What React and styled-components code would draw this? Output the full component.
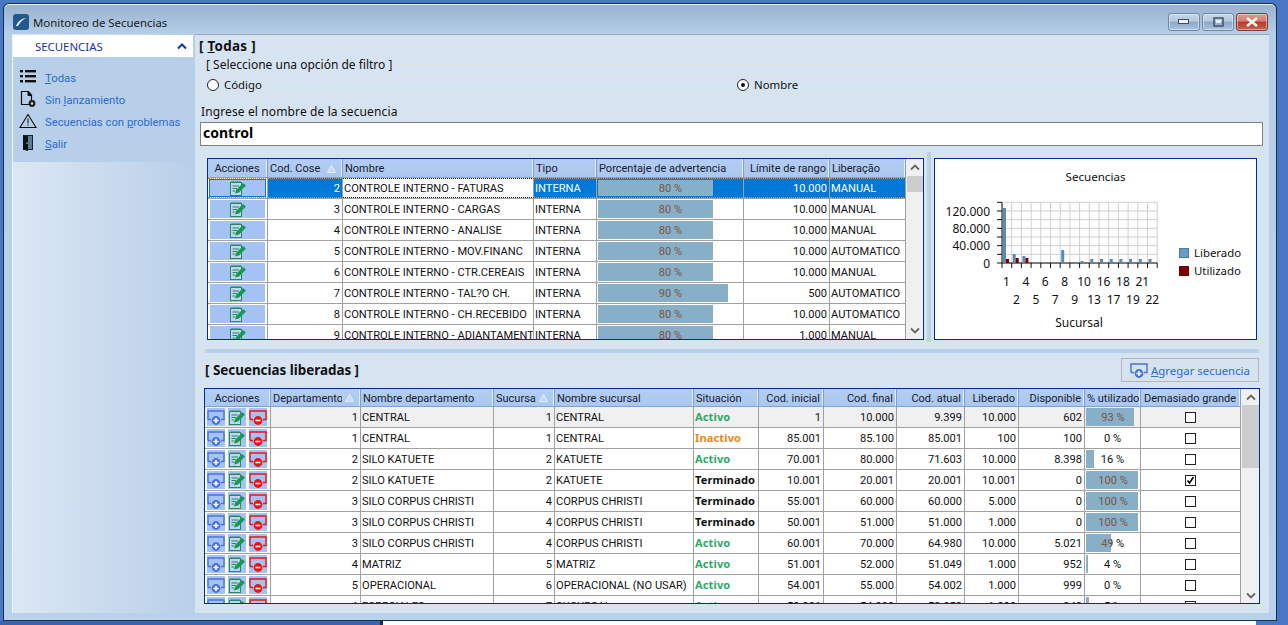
import React from "react";
import styled, { createGlobalStyle } from "styled-components";

const GlobalStyle = createGlobalStyle`
  html, body { margin: 0; padding: 0; background: #4a76c6; }
  body { font-family: "Noto Sans", "DejaVu Sans", sans-serif; font-size: 12px; color: #111; }
  * { box-sizing: border-box; }
`;

const Desktop = styled.div`
  width: 1288px;
  height: 625px;
  overflow: hidden;
  display: flex;
  flex-direction: column;
  background: #4a76c6;
`;

const Win = styled.div`
  width: 1274px;
  height: 618px;
  margin: 3px 0 0 3px;
  border: 1px solid #16324a;
  border-bottom-color: #0d3a4a;
  border-radius: 6px 6px 0 0;
  box-shadow: inset 0 1px 0 #e8f0f8;
  background: linear-gradient(#98b2cf 0, #b6cfe9 31px, #b9d2ec 100%);
  display: flex;
  flex-direction: column;
`;

const TitleBar = styled.div`
  height: 30px;
  flex: none;
  display: flex;
  align-items: center;
  padding: 5px 8px 0 9px;
`;

const TitleText = styled.span`
  margin-left: 4px;
  padding-top: 2px;
  font-size: 11.4px;
  color: #1a1a1a;
  flex: 1;
`;

const WinBtn = styled.div`
  width: 32px;
  height: 18px;
  margin-left: 2px;
  border: 1px solid ${(p) => (p.$close ? "#7a3b36" : "#6f86a3")};
  border-radius: 3px;
  box-shadow: inset 0 0 0 1px rgba(255, 255, 255, 0.45);
  background: ${(p) =>
    p.$close
      ? "linear-gradient(#dc9c8e 0, #cf7f70 45%, #b8392a 50%, #c9604e 100%)"
      : "linear-gradient(#c6d6e8 0, #b3c8de 45%, #8ba8c8 50%, #aac4de 100%)"};
  display: flex;
  align-items: center;
  justify-content: center;
`;

const WinBody = styled.div`
  flex: 1;
  min-height: 0;
  display: flex;
  gap: 2px;
  padding: 0 7px 7px 8px;
`;

const Sidebar = styled.aside`
  width: 181px;
  flex: none;
  border-left: 1px solid #eef4fa;
  padding-top: 1px;
  display: flex;
  flex-direction: column;
  background: linear-gradient(90deg, #dbe7f4, #b9cfe9);
`;

const SideHead = styled.div`
  height: 22px;
  flex: none;
  background: #fff;
  color: #1b2f9e;
  font-size: 11.4px;
  padding: 1px 6px 0 22px;
  display: flex;
  align-items: center;
  justify-content: space-between;
`;

const SideList = styled.nav`
  height: 105px;
  flex: none;
  background: #b8cfe9;
  padding: 9px 0 0 6px;
`;

const SideLink = styled.div`
  height: 22px;
  display: flex;
  align-items: center;
  gap: 8px;
  color: #2a6ccf;
  font-family: "Roboto", sans-serif;
  font-size: 11.3px;
  white-space: nowrap;
  svg { flex: none; }
  span { padding-top: 2px; }
`;

const Main = styled.main`
  flex: 1;
  min-width: 0;
  background: #d6e4f2;
  border-top: 1px solid #a3a8ad;
  padding-top: 3px;
  display: flex;
  flex-direction: column;
`;

const Heading = styled.div`
  font-weight: 700;
  font-size: 13.4px;
  line-height: 16px;
  color: #111;
  white-space: pre;
`;

const TopHeading = styled(Heading)`
  margin-left: 4px;
  height: 16px;
  letter-spacing: 0.3px;
`;

const FilterBox = styled.fieldset`
  margin: 3px 4px 0 3px;
  padding: 7px 8px 0;
  height: 39px;
  border: 1px solid #dfe3e6;
  min-width: 0;
`;

const FilterLegend = styled.legend`
  height: 14px;
  padding: 1px 0 0;
  margin-left: -1px;
  line-height: 14px;
  font-size: 12px;
`;

const RadioRow = styled.div`
  display: grid;
  grid-template-columns: 530px 1fr;
`;

const RadioItem = styled.label`
  display: flex;
  align-items: center;
  gap: 5px;
  line-height: 14px;
  font-size: 11.4px;
`;

const RadioDot = styled.span`
  width: 12px;
  height: 12px;
  border-radius: 50%;
  border: 1px solid #222;
  background: #fff;
  display: flex;
  align-items: center;
  justify-content: center;
  &::after {
    content: "";
    width: 4px;
    height: 4px;
    border-radius: 50%;
    background: ${(p) => (p.$on ? "#111" : "transparent")};
  }
`;

const FieldLabel = styled.div`
  margin: 8px 0 0 6px;
  padding-top: 1px;
  height: 14px;
  line-height: 14px;
  letter-spacing: 0.12px;
`;

const SearchBox = styled.input`
  display: block;
  width: 1063px;
  height: 24px;
  margin: 4px 0 0 5px;
  padding: 0 2px 3px;
  border: 1px solid #808080;
  background: #fff;
  font-family: inherit;
  font-size: 14px;
  font-weight: 700;
  color: #000;
  outline: none;
`;

const TopRow = styled.div`
  margin: 6px 0 0 12px;
  height: 190px;
  display: flex;
  align-items: flex-start;
`;

const GridFrame = styled.div`
  width: ${(p) => p.$w}px;
  height: ${(p) => p.$h}px;
  flex: none;
  border: 1px solid #00308f;
  background: #fff;
  display: flex;
  overflow: hidden;
  font-family: "Roboto", sans-serif;
`;

const FirstFrame = styled(GridFrame)`
  margin-top: 6px;
`;

const LowerFrame = styled(GridFrame)`
  margin: 6px 0 0 9px;
`;

const GridBody = styled.div`
  flex: 1;
  min-width: 0;
  overflow: hidden;
`;

const Row = styled.div`
  display: grid;
  grid-template-columns: ${(p) => p.$cols};
  height: 21px;
  border-bottom: 1px solid #a0a0a0;
  background: ${(p) => p.$bg || "#fff"};
`;

const HeadRow = styled(Row)`
  height: ${(p) => p.$h}px;
  border-bottom: 1px solid #7ea2d6;
  background: linear-gradient(#b4cef2, #aac7ef);
`;

const HeadCell = styled.div`
  display: flex;
  align-items: center;
  justify-content: ${(p) => (p.$align === "right" ? "flex-end" : p.$align === "center" ? "center" : "flex-start")};
  gap: 3px;
  padding: 1px ${(p) => (p.$sort ? 6 : 3)}px 0 2px;
  overflow: hidden;
  white-space: nowrap;
  border-right: 1px solid #7e9fd0;
  box-shadow: inset -1px 0 0 #e4eefb;
  font-size: 11px;
  color: #1a1a2a;
  svg { flex: none; }
`;

const HeadLabel = styled.span`
  min-width: 0;
  flex: 1;
  overflow: hidden;
`;

const Cell = styled.div`
  display: flex;
  align-items: center;
  justify-content: ${(p) => (p.$align === "right" ? "flex-end" : p.$align === "center" ? "center" : "flex-start")};
  padding: 0 2px ${(p) => (p.$bold ? 2 : 0)}px 1px;
  overflow: hidden;
  white-space: nowrap;
  border-right: 1px solid #a0a0a0;
  font-family: ${(p) => (p.$bold ? '"Noto Sans", sans-serif' : "inherit")};
  font-size: 11.1px;
  font-weight: ${(p) => (p.$bold ? 700 : 400)};
  letter-spacing: ${(p) => (p.$bold ? "0.1px" : "0")};
  color: ${(p) => p.$color || "#111"};
  background: ${(p) => p.$bg || "transparent"};
  border-top: ${(p) => (p.$dash ? `1px dotted ${p.$dash}` : "none")};
  border-bottom: ${(p) => (p.$dash ? `1px dotted ${p.$dash}` : "none")};
`;

const ActionCell = styled(Cell)`
  padding: 1px 2px;
  align-items: stretch;
`;

const ActionWide = styled.div`
  flex: 1;
  background: #a4c2f4;
  display: flex;
  align-items: center;
  justify-content: center;
  outline: ${(p) => (p.$sel ? "1px solid #0078d7" : "none")};
`;

const ActionTrio = styled.div`
  flex: 1;
  display: flex;
  gap: 3px;
  justify-content: flex-start;
`;

const ActionBtn = styled.div`
  width: 18px;
  background: #a4c2f4;
  display: flex;
  align-items: center;
  justify-content: center;
`;

const BarCell = styled(Cell)`
  position: relative;
  padding: 0;
  justify-content: center;
`;

const BarFill = styled.div`
  position: absolute;
  left: 1px;
  top: 1px;
  bottom: 1px;
  background: #88afc8;
  overflow: hidden;
`;

const BarLabel = styled.div`
  position: absolute;
  left: -1px;
  top: 0;
  bottom: 0;
  width: ${(p) => p.$w}px;
  display: flex;
  align-items: center;
  justify-content: center;
  color: #7a5444;
`;

const Scrollbar = styled.div`
  width: ${(p) => p.$w}px;
  flex: none;
  background: #f0f0f0;
  display: flex;
  flex-direction: column;
  align-items: stretch;
  padding: 0 0 0 1px;
`;

const ScrollArrow = styled.div`
  height: ${(p) => p.$h}px;
  flex: none;
  display: flex;
  align-items: center;
  justify-content: center;
`;

const ScrollThumb = styled.div`
  height: ${(p) => p.$h}px;
  flex: none;
  background: #cdcdcd;
`;

const ScrollGap = styled.div`
  flex: 1;
`;

const VSplit = styled.div`
  width: 4px;
  height: 190px;
  margin: 0 3px;
  flex: none;
  background: #b8d0e8;
`;

const ChartCard = styled.div`
  width: 323px;
  height: 182px;
  margin-top: 6px;
  flex: none;
  border: 1px solid #00308f;
  background: #fff;
  display: grid;
  grid-template-columns: 238px 1fr;
  grid-template-rows: 35px 1fr;
`;

const ChartTitle = styled.div`
  grid-column: 1 / 3;
  padding-top: 11px;
  text-align: center;
  line-height: 14px;
  font-size: 11.6px;
  color: #111;
`;

const ChartLegend = styled.div`
  padding: 52px 0 0 6px;
  display: flex;
  flex-direction: column;
  gap: 4px;
  font-size: 11.4px;
`;

const LegendItem = styled.div`
  display: flex;
  align-items: center;
  gap: 5px;
  line-height: 14px;
`;

const LegendSwatch = styled.span`
  width: 10px;
  height: 10px;
  border: 1px solid ${(p) => p.$edge};
  background: ${(p) => p.$color};
`;

const HSplit = styled.div`
  height: 4px;
  margin: 7px 10px 0 10px;
  flex: none;
  background: #b8d0e8;
`;

const SectionHead = styled.div`
  margin-top: 5px;
  height: 24px;
  padding: 0 10px;
  display: flex;
  align-items: center;
  justify-content: space-between;
`;

const AddButton = styled.div`
  width: 138px;
  height: 24px;
  border: 1px solid #b4b8bc;
  background: #d6e2ee;
  color: #2a6ccf;
  font-size: 11.4px;
  display: flex;
  align-items: center;
  justify-content: center;
  gap: 3px;
`;

const CheckBox = styled.span`
  width: 11px;
  height: 11px;
  border: 1px solid #222;
  background: #fff;
  display: flex;
  align-items: center;
  justify-content: center;
`;

const BackStrip = styled.div`
  flex: 1;
  display: grid;
  grid-template-columns: 380px 3px 873px 1fr;
  background: #4a76c6;
`;

const BackDark = styled.div`
  background: #1c2e4a;
`;

const BackWhite = styled.div`
  background: #fff;
`;

const BackBlue = styled.div`
  background: #3a62ad;
`;

function AppLogo() {
  return (
    <svg width="16" height="16" viewBox="0 0 16 16">
      <rect x="0" y="0" width="16" height="16" rx="3" fill="#23588c" />
      <path d="M3 12 C5 7 9 4 14 4 C10 5 7 8 5 12 Z" fill="#e8f0f8" />
    </svg>
  );
}

function ListIcon() {
  return (
    <svg width="18" height="16" viewBox="0 0 18 16" fill="#111">
      {[1, 6, 11].map((y) => (
        <g key={y}>
          <rect x="1" y={y} width="3" height="2.4" />
          <rect x="6" y={y} width="11" height="2.4" />
        </g>
      ))}
    </svg>
  );
}

function FileIcon() {
  return (
    <svg width="18" height="18" viewBox="0 0 18 18">
      <path d="M2.5 1.5 H9.5 L12.5 5 V14.5 H2.5 Z" fill="none" stroke="#111" strokeWidth="1.2" />
      <path d="M9 1.5 V5.5 H12.5" fill="#111" stroke="#111" />
      <circle cx="13" cy="13.5" r="3.4" fill="#222" />
      <circle cx="13" cy="13.5" r="1.2" fill="#d0d8e0" />
    </svg>
  );
}

function WarnIcon() {
  return (
    <svg width="18" height="16" viewBox="0 0 18 16">
      <path d="M9 1.5 L17 14.5 H1 Z" fill="none" stroke="#111" strokeWidth="1.1" />
      <rect x="8.5" y="5.5" width="1" height="5" fill="#111" />
      <rect x="8.5" y="11.5" width="1" height="1.2" fill="#111" />
    </svg>
  );
}

function DoorIcon() {
  return (
    <svg width="18" height="18" viewBox="0 0 18 18">
      <rect x="4" y="1" width="10" height="15" fill="#16222c" />
      <path d="M9 2 H13 V15 H9 Z" fill="#5d7d96" />
      <path d="M4 1 L9 3 V17 L4 15.5 Z" fill="#0b1218" />
      <rect x="7.5" y="8.5" width="1" height="1.5" fill="#c0d0e0" />
    </svg>
  );
}

function EditIcon() {
  return (
    <svg width="18" height="17" viewBox="0 0 18 17">
      <rect x="1.5" y="2.5" width="11" height="13" fill="rgba(255,255,255,0.3)" stroke="#2b8a57" />
      <path d="M3 1 V3 M5 1 V3 M7 1 V3 M9 1 V3 M11 1 V3" stroke="#2b8a57" />
      <path d="M3.5 6 H10 M3.5 8.5 H8 M3.5 11 H6" stroke="#2b8a57" />
      <path d="M6 13.5 L7 10 L14 3 L17 5.5 L10 12.5 Z" fill="#17994f" />
    </svg>
  );
}

function BracketIcon({ color, minus }) {
  return (
    <svg width="18" height="17" viewBox="0 0 18 17">
      <path d="M1 10.5 V2 H17 V10.5 H14 M1 10.5 H4" fill="none" stroke={color} strokeWidth="1.4" />
      <circle cx="9" cy="11.5" r="4.4" fill={color} />
      <rect x="6.5" y="10.7" width="5" height="1.6" fill="#fff" />
      {!minus && <rect x="8.2" y="9" width="1.6" height="5" fill="#fff" />}
    </svg>
  );
}

function SortArrow() {
  return (
    <svg width="9" height="8" viewBox="0 0 9 8">
      <path d="M4.5 0.5 L8.5 7.5 H0.5 Z" fill="#c6d9f4" stroke="#e8f0fb" />
    </svg>
  );
}

function Chevron({ up, color = "#666", w = 1.8 }) {
  return (
    <svg width="10" height="7" viewBox="0 0 10 7">
      <path d={up ? "M1 5.5 L5 1.5 L9 5.5" : "M1 1.5 L5 5.5 L9 1.5"} fill="none" stroke={color} strokeWidth={w} />
    </svg>
  );
}

function PctBar({ pct, inner, full, bg, dash }) {
  return (
    <BarCell $bg={bg} $dash={dash}>
      {pct}&nbsp;%
      <BarFill style={{ width: Math.round((inner * pct) / 100) }}>
        <BarLabel $w={full}>{pct}&nbsp;%</BarLabel>
      </BarFill>
    </BarCell>
  );
}

const firstCols = "60px 75px 191px 63px 147px 86px 76px";
const secondCols = "66px 90px 133px 61px 139px 65px 65px 73px 68px 54px 66px 56px 100px";

const seqRows = [
  [2, "FATURAS", 80, "10.000", "MANUAL"],
  [3, "CARGAS", 80, "10.000", "MANUAL"],
  [4, "ANALISE", 80, "10.000", "MANUAL"],
  [5, "MOV.FINANC", 80, "10.000", "AUTOMATICO"],
  [6, "CTR.CEREAIS", 80, "10.000", "MANUAL"],
  [7, "TAL?O CH.", 90, "500", "AUTOMATICO"],
  [8, "CH.RECEBIDO", 80, "10.000", "AUTOMATICO"],
  [9, "ADIANTAMENT", 80, "1.000", "MANUAL"],
];

const freed = [
  [1, "CENTRAL", 1, "CENTRAL", "Activo", "1", "10.000", "9.399", "10.000", "602", 93, false],
  [1, "CENTRAL", 1, "CENTRAL", "Inactivo", "85.001", "85.100", "85.001", "100", "100", 0, false],
  [2, "SILO KATUETE", 2, "KATUETE", "Activo", "70.001", "80.000", "71.603", "10.000", "8.398", 16, false],
  [2, "SILO KATUETE", 2, "KATUETE", "Terminado", "10.001", "20.001", "20.001", "10.001", "0", 100, true],
  [3, "SILO CORPUS CHRISTI", 4, "CORPUS CHRISTI", "Terminado", "55.001", "60.000", "60.000", "5.000", "0", 100, false],
  [3, "SILO CORPUS CHRISTI", 4, "CORPUS CHRISTI", "Terminado", "50.001", "51.000", "51.000", "1.000", "0", 100, false],
  [3, "SILO CORPUS CHRISTI", 4, "CORPUS CHRISTI", "Activo", "60.001", "70.000", "64.980", "10.000", "5.021", 49, false],
  [4, "MATRIZ", 5, "MATRIZ", "Activo", "51.001", "52.000", "51.049", "1.000", "952", 4, false],
  [5, "OPERACIONAL", 6, "OPERACIONAL (NO USAR)", "Activo", "54.001", "55.000", "54.002", "1.000", "999", 0, false],
  [6, "ESPECIALES", 7, "SUCURSAL", "Activo", "53.001", "54.000", "53.052", "1.000", "948", 5, false],
];

const statusColor = { Activo: "#2fa86a", Inactivo: "#f08a10", Terminado: "#111" };

function SeqChart() {
  const x0 = 67;
  const yBase = 69;
  const step = 9.7;
  const minor = 8.67;
  const plotW = step * 16;
  const blue = [55, 9, 7, 0, 0, 0, 13, 0, 2, 4, 4, 4, 4, 4, 4, 4];
  const red = [4, 5, 5];
  const top = ["1", "4", "6", "8", "10", "16", "18", "21"];
  const bottom = ["2", "5", "7", "9", "13", "17", "19", "22"];
  return (
    <svg width="238" height="146" viewBox="0 0 238 146" fontFamily="inherit" fontSize="12">
      {Array.from({ length: 17 }).map((_, i) => (
        <line key={i} x1={x0 + i * step} x2={x0 + i * step} y1={yBase - 7 * minor} y2={yBase} stroke="#cfcfcf" />
      ))}
      {Array.from({ length: 8 }).map((_, i) => (
        <line key={i} x1={x0} x2={x0 + plotW} y1={yBase - i * minor} y2={yBase - i * minor} stroke="#cfcfcf" />
      ))}
      {Array.from({ length: 8 }).map((_, i) => (
        <line key={i} x1={x0 - 5} x2={x0} y1={yBase - i * minor} y2={yBase - i * minor} stroke="#111" />
      ))}
      {Array.from({ length: 17 }).map((_, i) => (
        <line key={i} x1={x0 + i * step} x2={x0 + i * step} y1={yBase} y2={yBase + 5} stroke="#111" />
      ))}
      <line x1={x0} x2={x0} y1={yBase - 7 * minor} y2={yBase} stroke="#111" />
      <line x1={x0} x2={x0 + plotW} y1={yBase} y2={yBase} stroke="#111" />
      {blue.map((h, i) =>
        h ? <rect key={i} x={x0 + 1 + i * step} y={yBase - h} width="3" height={h} fill="#5d8bb0" /> : null
      )}
      {red.map((h, i) => (
        <rect key={i} x={x0 + 4 + i * step} y={yBase - h} width="3" height={h} fill="#7a0000" />
      ))}
      {[["120.000", 52], ["80.000", 34.7], ["40.000", 17.3], ["0", 0]].map(([t, d]) => (
        <text key={t} x={x0 - 12} y={yBase - d + 4.5} textAnchor="end" fill="#111">{t}</text>
      ))}
      {top.map((t, i) => (
        <text key={t} x={x0 + 4.5 + i * 19.4} y={92} textAnchor="middle" fill="#111">{t}</text>
      ))}
      {bottom.map((t, i) => (
        <text key={t} x={x0 + 14.5 + i * 19.4} y={110} textAnchor="middle" fill="#111">{t}</text>
      ))}
      <text x="144" y="133" textAnchor="middle" fill="#111">Sucursal</text>
    </svg>
  );
}

export default function App() {
  return (
    <Desktop>
      <GlobalStyle />
      <Win>
        <TitleBar>
          <AppLogo />
          <TitleText>Monitoreo de Secuencias</TitleText>
          <WinBtn>
            <svg width="12" height="6" viewBox="0 0 12 6"><rect x="0.5" y="0.5" width="10" height="4" fill="#eef2f6" stroke="#3c4c60" /></svg>
          </WinBtn>
          <WinBtn>
            <svg width="11" height="10" viewBox="0 0 11 10"><rect x="1" y="1" width="9" height="8" fill="none" stroke="#3c4c60" strokeWidth="1.4" /><rect x="3" y="3" width="5" height="3" fill="#e6edf4" /></svg>
          </WinBtn>
          <WinBtn $close>
            <svg width="14" height="10" viewBox="0 0 14 10"><path d="M2 1 L12 9 M12 1 L2 9" stroke="#f2f2f2" strokeWidth="2.6" /></svg>
          </WinBtn>
        </TitleBar>
        <WinBody>
          <Sidebar>
            <SideHead>
              SECUENCIAS
              <Chevron up color="#123a9c" w="2" />
            </SideHead>
            <SideList>
              <SideLink><ListIcon /><span><u>T</u>odas</span></SideLink>
              <SideLink><FileIcon /><span>Sin <u>l</u>anzamiento</span></SideLink>
              <SideLink><WarnIcon /><span>Secuencias con <u>p</u>roblemas</span></SideLink>
              <SideLink><DoorIcon /><span><u>S</u>alir</span></SideLink>
            </SideList>
          </Sidebar>
          <Main>
            <TopHeading>[ <u>T</u>odas ]</TopHeading>
            <FilterBox>
              <FilterLegend>[ Seleccione una opción de filtro ]</FilterLegend>
              <RadioRow>
                <RadioItem><RadioDot />Código</RadioItem>
                <RadioItem><RadioDot $on />Nombre</RadioItem>
              </RadioRow>
            </FilterBox>
            <FieldLabel>Ingrese el nombre de la secuencia</FieldLabel>
            <SearchBox defaultValue="control" />
            <TopRow>
              <FirstFrame $w={717} $h={182}>
                <GridBody>
                  <HeadRow $cols={firstCols} $h={19}>
                    <HeadCell $align="center">Acciones</HeadCell>
                    <HeadCell $sort><HeadLabel>Cod. Cose</HeadLabel><SortArrow /></HeadCell>
                    <HeadCell>Nombre</HeadCell>
                    <HeadCell>Tipo</HeadCell>
                    <HeadCell>Porcentaje de advertencia</HeadCell>
                    <HeadCell $align="right">Límite de rango</HeadCell>
                    <HeadCell>Liberação</HeadCell>
                  </HeadRow>
                  {seqRows.map(([id, name, pct, limit, mode], i) => {
                    const sel = i === 0;
                    const selBg = sel ? "#0078d7" : undefined;
                    const selText = sel ? "#fff" : undefined;
                    const dash = sel ? "#f08a24" : undefined;
                    return (
                      <Row key={id} $cols={firstCols}>
                        <ActionCell $dash={dash}>
                          <ActionWide $sel={sel}><EditIcon /></ActionWide>
                        </ActionCell>
                        <Cell $align="right" $bg={selBg} $color={selText} $dash={dash}>{id}</Cell>
                        <Cell $dash={sel ? "#111" : undefined}>CONTROLE INTERNO - {name}</Cell>
                        <Cell $bg={selBg} $color={selText} $dash={dash}>INTERNA</Cell>
                        <PctBar pct={pct} inner={144} full={147} bg={selBg} dash={dash} />
                        <Cell $align="right" $bg={selBg} $color={selText} $dash={dash}>{limit}</Cell>
                        <Cell $bg={selBg} $color={selText} $dash={dash}>{mode}</Cell>
                      </Row>
                    );
                  })}
                </GridBody>
                <Scrollbar $w={17}>
                  <ScrollArrow $h={17}><Chevron up /></ScrollArrow>
                  <ScrollThumb $h={16} />
                  <ScrollGap />
                  <ScrollArrow $h={17}><Chevron /></ScrollArrow>
                </Scrollbar>
              </FirstFrame>
              <VSplit />
              <ChartCard>
                <ChartTitle>Secuencias</ChartTitle>
                <SeqChart />
                <ChartLegend>
                  <LegendItem><LegendSwatch $color="#6a9cc4" $edge="#4d7a9e" />Liberado</LegendItem>
                  <LegendItem><LegendSwatch $color="#7a0000" $edge="#7a0000" />Utilizado</LegendItem>
                </ChartLegend>
              </ChartCard>
            </TopRow>
            <HSplit />
            <SectionHead>
              <Heading>[ Secuencias liberadas ]</Heading>
              <AddButton>
                <BracketIcon color="#3f74d8" />
                <span><u>A</u>gregar secuencia</span>
              </AddButton>
            </SectionHead>
            <LowerFrame $w={1056} $h={216}>
              <GridBody>
                <HeadRow $cols={secondCols} $h={18}>
                  <HeadCell $align="center">Acciones</HeadCell>
                  <HeadCell $sort><HeadLabel>Departamento</HeadLabel><SortArrow /></HeadCell>
                  <HeadCell>Nombre departamento</HeadCell>
                  <HeadCell $sort><HeadLabel>Sucursa</HeadLabel><SortArrow /></HeadCell>
                  <HeadCell>Nombre sucursal</HeadCell>
                  <HeadCell>Situación</HeadCell>
                  <HeadCell $align="right">Cod. inicial</HeadCell>
                  <HeadCell $align="right">Cod. final</HeadCell>
                  <HeadCell $align="right">Cod. atual</HeadCell>
                  <HeadCell $align="right">Liberado</HeadCell>
                  <HeadCell $align="right">Disponible</HeadCell>
                  <HeadCell>% utilizado</HeadCell>
                  <HeadCell $align="center">Demasiado grande</HeadCell>
                </HeadRow>
                {freed.map((r, i) => (
                  <Row key={i} $cols={secondCols} $bg={i === 0 ? "#f0f0f0" : undefined}>
                    <ActionCell>
                      <ActionTrio>
                        <ActionBtn><BracketIcon color="#4a72e0" /></ActionBtn>
                        <ActionBtn><EditIcon /></ActionBtn>
                        <ActionBtn><BracketIcon color="#f01010" minus /></ActionBtn>
                      </ActionTrio>
                    </ActionCell>
                    <Cell $align="right">{r[0]}</Cell>
                    <Cell>{r[1]}</Cell>
                    <Cell $align="right">{r[2]}</Cell>
                    <Cell>{r[3]}</Cell>
                    <Cell $bold $color={statusColor[r[4]]}>{r[4]}</Cell>
                    <Cell $align="right">{r[5]}</Cell>
                    <Cell $align="right">{r[6]}</Cell>
                    <Cell $align="right">{r[7]}</Cell>
                    <Cell $align="right">{r[8]}</Cell>
                    <Cell $align="right">{r[9]}</Cell>
                    <PctBar pct={r[10]} inner={52} full={56} />
                    <Cell $align="center">
                      <CheckBox>
                        {r[11] && (
                          <svg width="9" height="9" viewBox="0 0 9 9"><path d="M1.5 4.5 L3.5 7 L7.5 1" fill="none" stroke="#111" strokeWidth="1.8" /></svg>
                        )}
                      </CheckBox>
                    </Cell>
                  </Row>
                ))}
              </GridBody>
              <Scrollbar $w={18}>
                <ScrollArrow $h={16}><Chevron up /></ScrollArrow>
                <ScrollThumb $h={63} />
                <ScrollGap />
                <ScrollArrow $h={16}><Chevron /></ScrollArrow>
              </Scrollbar>
            </LowerFrame>
          </Main>
        </WinBody>
      </Win>
      <BackStrip>
        <BackBlue />
        <BackDark />
        <BackWhite />
        <div />
      </BackStrip>
    </Desktop>
  );
}
